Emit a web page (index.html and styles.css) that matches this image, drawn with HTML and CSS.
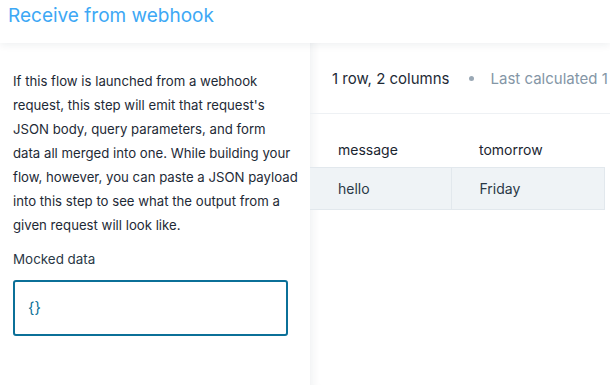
FILE: index.html
```html
<!DOCTYPE html>
<html>
<head>
    <title>Receive from webhook</title>
    <link rel="stylesheet" href="styles.css">
</head>
<body>
    <div class="header">
        <div class="title">Receive from webhook</div>
    </div>
    <div class="main">
        <div class="sidebar">
            <p class="description">If this flow is launched from a webhook<br>
                request, this step will emit that request's<br>
                JSON body, query parameters, and form<br>
                data all merged into one. While building your<br>
                flow, however, you can paste a JSON payload<br>
                into this step to see what the output from a<br>
                given request will look like.</p>
            <div class="field_label">Mocked data</div>
            <div class="mock_input">{}</div>
        </div>
        <div class="output">
            <div class="meta">
                <span class="meta_count">1 row, 2 columns</span>
                <span class="meta_dot"></span>
                <span class="meta_time">Last calculated 1</span>
            </div>
            <table class="result_table">
                <thead>
                    <tr>
                        <th class="col_message">message</th>
                        <th class="col_tomorrow">tomorrow</th>
                    </tr>
                </thead>
                <tbody>
                    <tr>
                        <td>hello</td>
                        <td>Friday</td>
                    </tr>
                </tbody>
            </table>
        </div>
    </div>
</body>
</html>
```

FILE: styles.css
```css
body {
    margin: 0;
    width: 610px;
    height: 385px;
    overflow: hidden;
    background-color: #ffffff;
    font-family: 'Inter', 'Noto Sans', sans-serif;
    color: #1e2a36;
}

.header {
    height: 43px;
    background-color: #ffffff;
    box-shadow: 0 2px 8px rgba(20, 40, 60, 0.07);
    position: relative;
    z-index: 2;
}

.title {
    padding: 3px 0 0 8px;
    font-size: 19px;
    line-height: 26px;
    color: #3da8f5;
}

.main {
    display: flex;
    height: 342px;
}

.sidebar {
    width: 297px;
    padding: 0 0 0 13px;
    flex-shrink: 0;
}

.description {
    margin: 26px 0 0 0;
    width: 290px;
    font-size: 13.2px;
    line-height: 24px;
    white-space: nowrap;
    color: #1e2a36;
}

.field_label {
    margin-top: 13px;
    font-size: 13.4px;
    line-height: 18px;
    color: #2a3846;
}

.mock_input {
    margin-top: 12px;
    width: 245px;
    height: 28px;
    padding: 12px 13px;
    border: 2px solid #0b7098;
    border-radius: 3px;
    font-size: 15px;
    line-height: 28px;
    color: #0b7098;
}

.output {
    flex: 1;
    min-width: 0;
    background-color: #ffffff;
    box-shadow: inset 10px 0 10px -8px rgba(20, 40, 60, 0.07);
}

.meta {
    display: flex;
    align-items: center;
    height: 70px;
    padding-left: 22px;
    border-bottom: 1px solid #eef1f4;
    font-size: 15px;
    white-space: nowrap;
}

.meta_count {
    color: #1e2a36;
}

.meta_dot {
    width: 5px;
    height: 5px;
    margin: 0 17px 0 19px;
    border-radius: 50%;
    background-color: #9aa8b5;
}

.meta_time {
    color: #8496a6;
}

.result_table {
    margin-top: 18px;
    border-collapse: collapse;
    font-size: 14px;
    width: 295px;
}

.result_table th {
    text-align: left;
    font-weight: 400;
    height: 35px;
    padding: 0 0 0 28px;
    color: #1a2530;
}

.col_message {
    width: 113px;
}

.result_table td {
    height: 41px;
    padding: 0 0 0 28px;
    background-color: #eff3f6;
    border-top: 1px solid #e2e8ed;
    border-bottom: 1px solid #e2e8ed;
    color: #2a3846;
}

.result_table td + td {
    border-left: 1px solid #e2e8ed;
    border-right: 1px solid #e2e8ed;
}
```
